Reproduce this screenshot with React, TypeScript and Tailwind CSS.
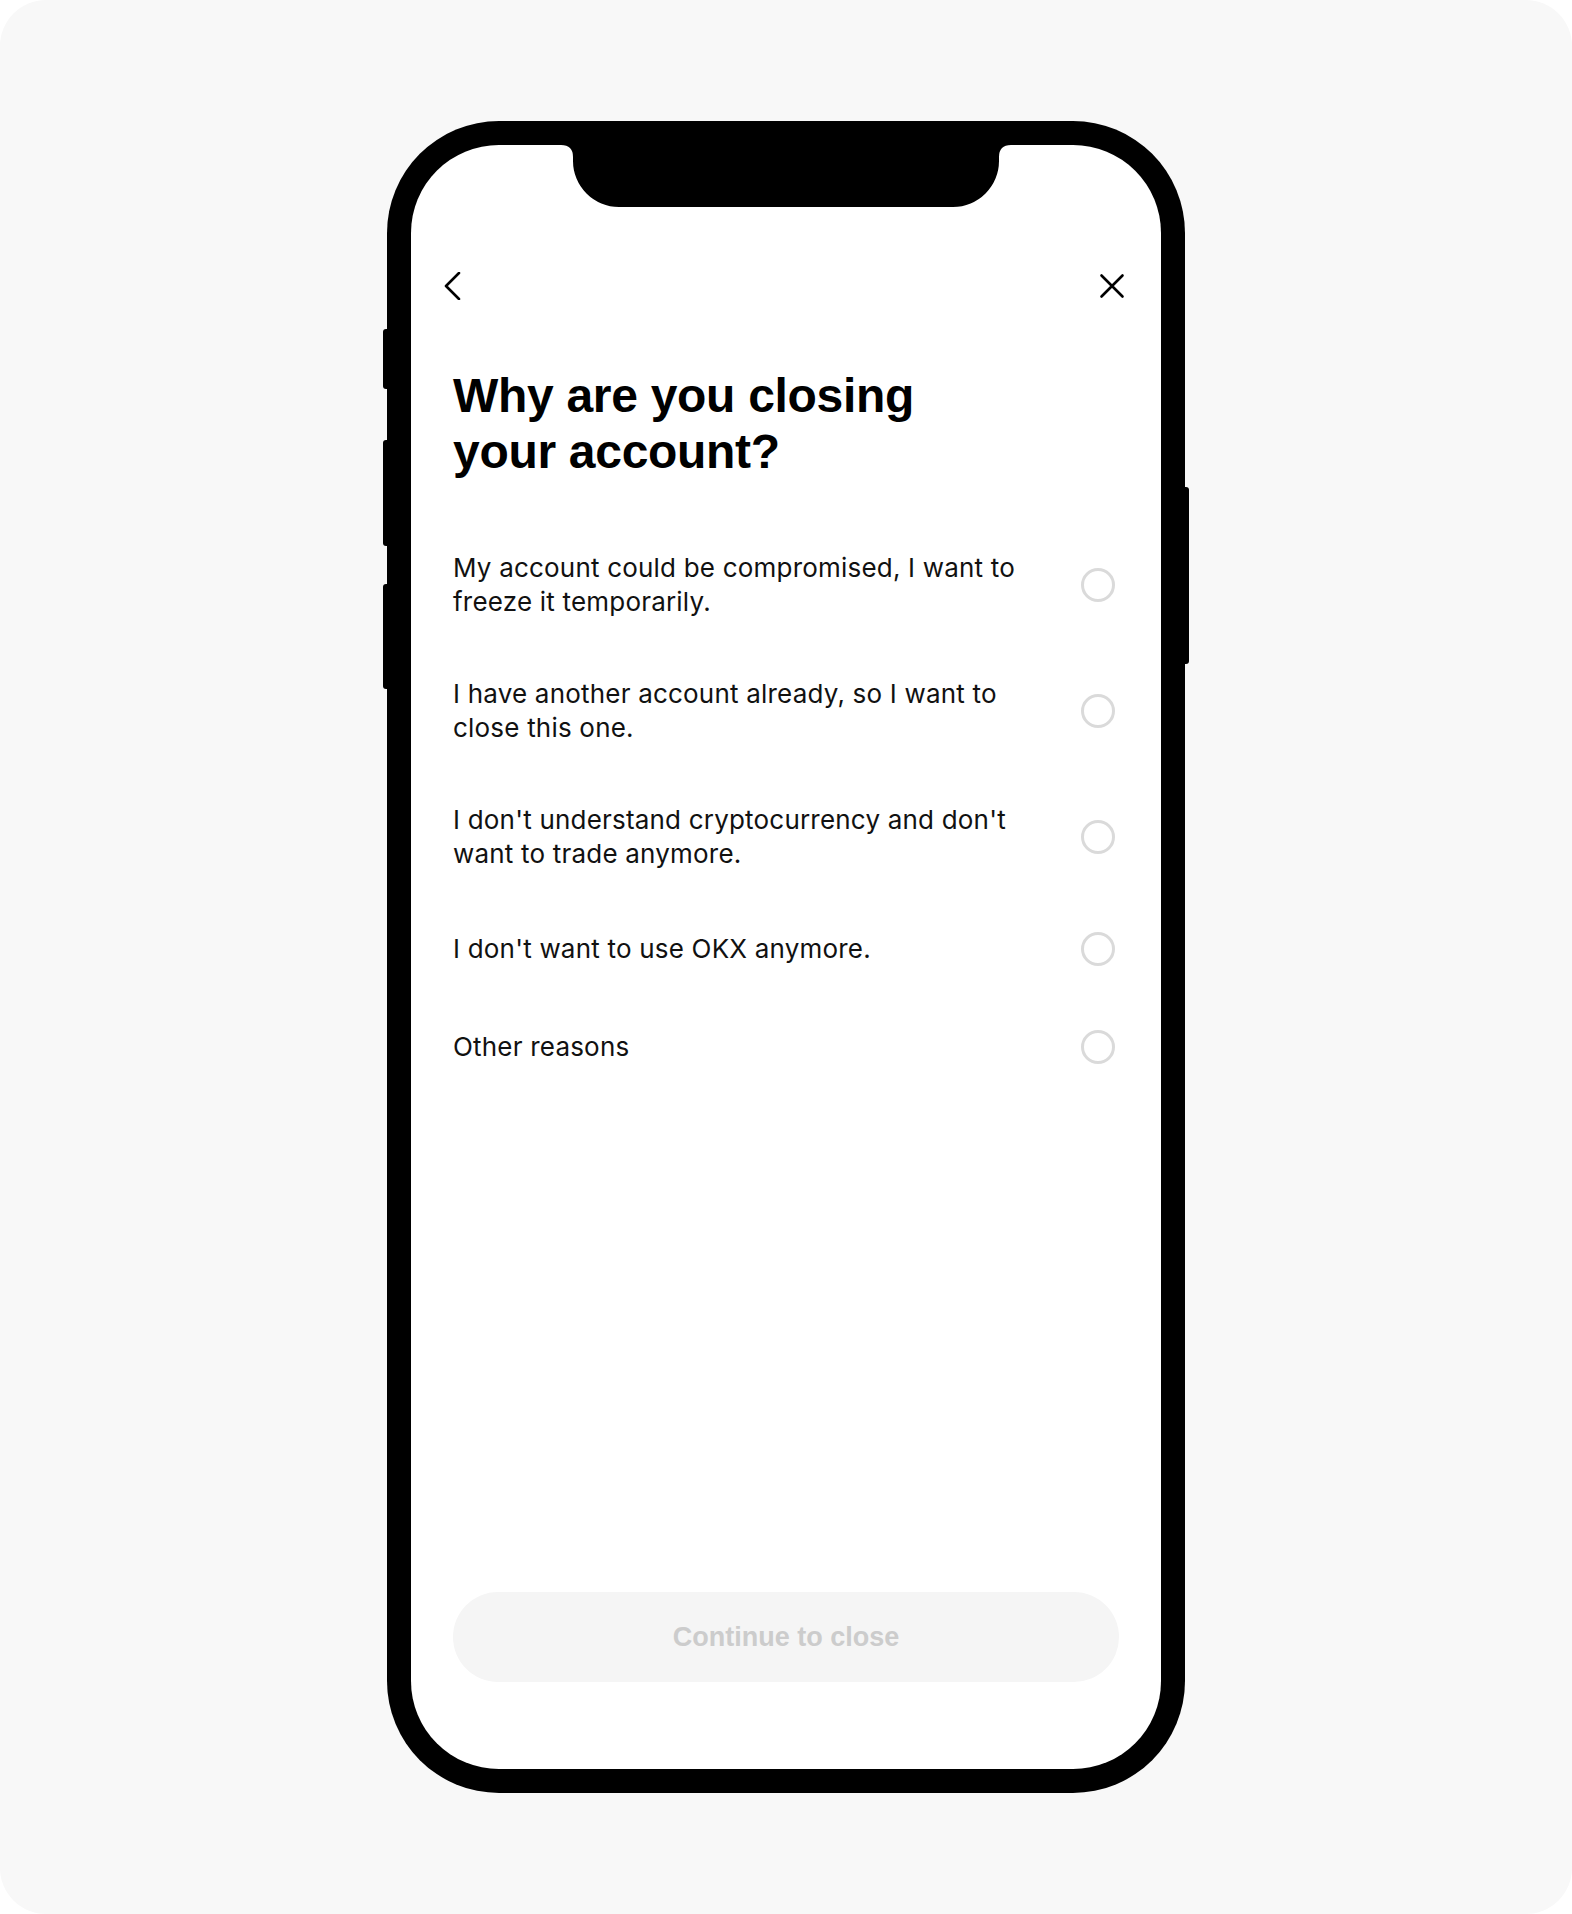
import React from "react";

const reasons: string[] = [
  "My account could be compromised, I want to freeze it temporarily.",
  "I have another account already, so I want to close this one.",
  "I don't understand cryptocurrency and don't want to trade anymore.",
  "I don't want to use OKX anymore.",
  "Other reasons",
];

function BackIcon() {
  return (
    <svg width="28" height="28" viewBox="0 0 28 28" fill="none">
      <path
        d="M20 1 L7 14 L20 27"
        stroke="#000"
        strokeWidth="2.6"
        strokeLinecap="round"
        strokeLinejoin="round"
      />
    </svg>
  );
}

function CloseIcon() {
  return (
    <svg width="28" height="28" viewBox="0 0 28 28" fill="none">
      <path
        d="M3.5 3.5 L24.5 24.5 M24.5 3.5 L3.5 24.5"
        stroke="#000"
        strokeWidth="2.6"
        strokeLinecap="round"
      />
    </svg>
  );
}

function Notch() {
  return (
    <svg
      className="absolute top-0 left-[150px]"
      width="450"
      height="62"
      viewBox="0 0 450 62"
    >
      <path
        d="M0 0 H450 Q438 0 438 12 V16 A46 46 0 0 1 392 62 H58 A46 46 0 0 1 12 16 V12 Q12 0 0 0 Z"
        fill="#000"
      />
    </svg>
  );
}

function ReasonRow({ text }: { text: string }) {
  return (
    <div className="flex items-center gap-[30px] py-[29px]">
      <div className="flex min-h-[40px] flex-1 items-center">
        <p className="font-['Inter',sans-serif] text-[26px] leading-[34px] tracking-[0.2px] text-[#111]">
          {text}
        </p>
      </div>
      <span className="mr-[4px] block h-[34px] w-[34px] shrink-0 rounded-full border-[3px] border-[#dadada]" />
    </div>
  );
}

export default function App() {
  return (
    <div className="min-h-screen bg-white">
      <div className="flex h-[1914px] w-full items-center justify-center rounded-[46px] bg-[#f8f8f8]">
        <div className="relative">
          {/* hardware buttons */}
          <span className="absolute left-[-4px] top-[208px] h-[60px] w-[6px] rounded-l-[3px] bg-black" />
          <span className="absolute left-[-4px] top-[319px] h-[106px] w-[6px] rounded-l-[3px] bg-black" />
          <span className="absolute left-[-4px] top-[463px] h-[105px] w-[6px] rounded-l-[3px] bg-black" />
          <span className="absolute right-[-4px] top-[366px] h-[177px] w-[6px] rounded-r-[3px] bg-black" />

          <div className="h-[1672px] w-[798px] rounded-[112px] bg-black p-[24px]">
            <div className="relative flex h-full w-full flex-col overflow-hidden rounded-[88px] bg-white">
              <Notch />

              {/* navigation */}
              <div className="flex items-center justify-between pl-[28px] pr-[35px] pt-[127px]">
                <button className="flex h-[28px] w-[28px] items-center justify-center">
                  <BackIcon />
                </button>
                <button className="flex h-[28px] w-[28px] items-center justify-center">
                  <CloseIcon />
                </button>
              </div>

              <div className="flex flex-1 flex-col px-[42px]">
                <h1 className="mt-[68px] font-['Liberation_Sans',Arial,sans-serif] text-[48px] font-bold leading-[56px] tracking-[-0.3px] text-black">
                  Why are you closing
                  <br />
                  your account?
                </h1>

                <div className="mt-[42px] flex flex-col">
                  {reasons.map((r) => (
                    <ReasonRow key={r} text={r} />
                  ))}
                </div>

                <div className="flex-1" />

                <button
                  disabled
                  className="mb-[87px] flex h-[90px] w-full items-center justify-center rounded-full bg-[#f5f5f5] font-['Liberation_Sans',Arial,sans-serif] text-[27px] font-bold text-[#cccccc]"
                >
                  Continue to close
                </button>
              </div>
            </div>
          </div>
        </div>
      </div>
    </div>
  );
}
